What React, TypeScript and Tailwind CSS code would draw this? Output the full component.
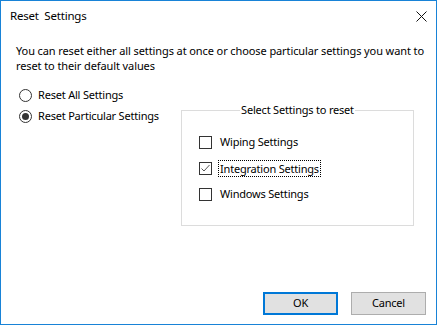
import React, { useState } from "react";

const font = {
  fontFamily: '"Noto Sans", "Open Sans", Arial, sans-serif',
  letterSpacing: "-0.2px",
};

function Radio({ checked }: { checked: boolean }) {
  return (
    <span className="flex h-[13px] w-[13px] items-center justify-center rounded-full border border-[#333] bg-white">
      {checked && <span className="h-[7px] w-[7px] rounded-full bg-[#333]" />}
    </span>
  );
}

function Checkbox({ checked }: { checked: boolean }) {
  return (
    <span className="flex h-[13px] w-[13px] items-center justify-center border border-[#333] bg-white">
      {checked && (
        <svg width="11" height="11" viewBox="0 0 11 11">
          <path d="M1.5 5.5l2.5 2.5 5.5-6" fill="none" stroke="#555" strokeWidth="1" />
        </svg>
      )}
    </span>
  );
}

export default function App() {
  const [mode, setMode] = useState<"all" | "particular">("particular");
  const [checks, setChecks] = useState({
    wiping: false,
    integration: true,
    windows: false,
  });

  const items: { key: keyof typeof checks; label: string }[] = [
    { key: "wiping", label: "Wiping Settings" },
    { key: "integration", label: "Integration Settings" },
    { key: "windows", label: "Windows Settings" },
  ];

  return (
    <div
      className="flex h-[325px] w-[437px] flex-col border border-[#1883d7] bg-white text-[11px] text-black"
      style={font}
    >
      {/* Title bar */}
      <div className="flex h-[30px] items-center justify-between pl-[9px] pr-[9px] text-[11.5px]">
        <span className="whitespace-pre">Reset  Settings</span>
        <svg width="11" height="11" viewBox="0 0 11 11">
          <path d="M0.5 0.5l10 10M10.5 0.5l-10 10" stroke="#111" strokeWidth="1" />
        </svg>
      </div>

      <div className="flex flex-1 flex-col px-[15px] pt-[12px]">
        <p className="whitespace-nowrap leading-[15px] tracking-[-0.1px]">
          You can reset either all settings at once or choose particular settings you want to
          <br />
          reset to their default values
        </p>

        <div className="mt-[12px] flex">
          <div className="flex w-[165px] flex-col pl-[3px]">
            <button
              className="flex h-[21px] items-center gap-[6px]"
              onClick={() => setMode("all")}
            >
              <Radio checked={mode === "all"} />
              <span>Reset All Settings</span>
            </button>
            <button
              className="flex h-[21px] items-center gap-[6px]"
              onClick={() => setMode("particular")}
            >
              <Radio checked={mode === "particular"} />
              <span>Reset Particular Settings</span>
            </button>
          </div>

          <fieldset className="mt-[18px] h-[123px] w-[233px] border border-[#dcdcdc] px-[17px]">
            <legend className="mx-auto px-[1px] leading-[14px]">Select Settings to reset</legend>
            <div className="mt-[16px] flex flex-col gap-[8px]">
              {items.map((it) => (
                <button
                  key={it.key}
                  className="flex h-[18px] items-center gap-[6px]"
                  onClick={() => setChecks({ ...checks, [it.key]: !checks[it.key] })}
                >
                  <Checkbox checked={checks[it.key]} />
                  <span
                    className={
                      it.key === "integration"
                        ? "border border-dotted border-black px-[1px] leading-[15px]"
                        : "px-[2px]"
                    }
                  >
                    {it.label}
                  </span>
                </button>
              ))}
            </div>
          </fieldset>
        </div>
      </div>

      <div className="mb-[9px] flex justify-end gap-[13px] pr-[10px]">
        <button className="h-[23px] w-[75px] border-2 border-[#0078d7] bg-[#e1e1e1]">OK</button>
        <button className="h-[23px] w-[75px] border border-[#adadad] bg-[#e1e1e1]">Cancel</button>
      </div>
    </div>
  );
}
